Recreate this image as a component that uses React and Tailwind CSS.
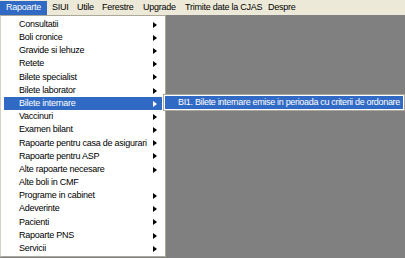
import React from 'react';

const menuBar = [
  { label: 'Rapoarte', w: 'w-[47px]', active: true },
  { label: 'SIUI', w: 'w-[25px]' },
  { label: 'Utile', w: 'w-[25px]' },
  { label: 'Ferestre', w: 'w-[41px]' },
  { label: 'Upgrade', w: 'w-[42px]' },
  { label: 'Trimite date la CJAS', w: 'w-[83px]' },
  { label: 'Despre', w: 'w-[40px]' },
];

const items = [
  ['Consultatii', true],
  ['Boli cronice', true],
  ['Gravide si lehuze', true],
  ['Retete', true],
  ['Bilete specialist', true],
  ['Bilete laborator', true],
  ['Bilete internare', true],
  ['Vaccinuri', true],
  ['Examen bilant', true],
  ['Rapoarte pentru casa de asigurari', true],
  ['Rapoarte pentru ASP', true],
  ['Alte rapoarte necesare', true],
  ['Alte boli in CMF', false],
  ['Programe in cabinet', true],
  ['Adeverinte', true],
  ['Pacienti', true],
  ['Rapoarte PNS', true],
  ['Servicii', true],
];

const Arrow = ({ white }) => (
  <span
    className={`w-0 h-0 border-y-[3px] border-y-transparent border-l-[4px] ${white ? 'border-l-white' : 'border-l-black'}`}
  />
);

export default function App() {
  return (
    <div
      className="w-[405px] h-[258px] flex flex-col overflow-hidden bg-[#808080] text-black"
      style={{ fontFamily: '"Liberation Sans", Arial, sans-serif' }}
    >
      {/* Menu bar */}
      <div className="h-[15px] bg-[#ece9d8] flex items-end text-[9px] tracking-[-0.25px]">
        {menuBar.map(m => (
          <div
            key={m.label}
            className={`${m.w} h-[14px] flex items-center pl-[5px] whitespace-nowrap ${m.active ? 'bg-[#316ac5] text-white pl-[6px]' : ''}`}
          >
            {m.label}
          </div>
        ))}
      </div>

      {/* Workspace */}
      <div className="flex-1 relative">
        {/* Dropdown */}
        <div className="absolute left-0 top-0 w-[166px] bg-white border border-[#aca899] border-l-[#d4d0c8] pt-[2px] pb-px pl-[3px] pr-[3px] text-[9px] tracking-[-0.25px]">
          {items.map(([label, sub]) => {
            const active = label === 'Bilete internare';
            return (
              <div
                key={label}
                className={`h-[13.2px] flex items-center justify-between pl-[15px] pr-[5px] whitespace-nowrap ${active ? 'bg-[#316ac5] text-white' : ''}`}
              >
                <span>{label}</span>
                {sub && <Arrow white={active} />}
              </div>
            );
          })}
        </div>

        {/* Submenu */}
        <div className="absolute left-[163px] top-[79px] w-[242px] h-[17px] bg-white border border-[#aca899] p-px">
          <div className="h-full bg-[#316ac5] text-white text-[9px] tracking-[-0.32px] flex items-center pl-[13px] whitespace-nowrap">
            BI1. Bilete internare emise in perioada cu criterii de ordonare
          </div>
        </div>
      </div>
    </div>
  );
}
